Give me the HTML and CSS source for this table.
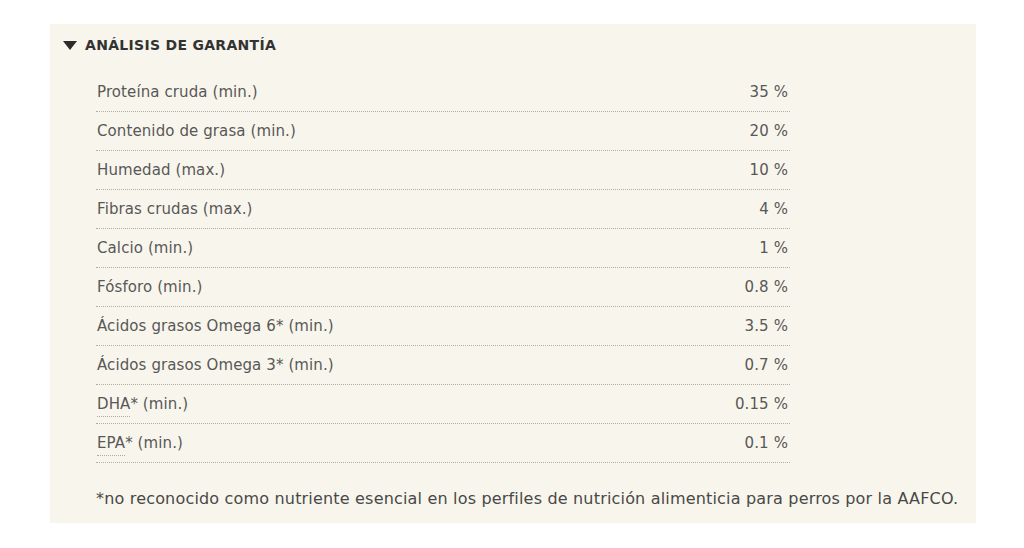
FILE: index.html
```html
<!DOCTYPE html>
<html lang="es">
<head>
<meta charset="utf-8">
<link rel="stylesheet" href="styles.css">
</head>
<body>
<section class="panel">
  <h2 class="title"><span class="tri"></span>ANÁLISIS DE GARANTÍA</h2>
  <div class="table">
    <div class="row"><span>Proteína cruda (min.)</span><span>35 %</span></div>
    <div class="row"><span>Contenido de grasa (min.)</span><span>20 %</span></div>
    <div class="row"><span>Humedad (max.)</span><span>10 %</span></div>
    <div class="row"><span>Fibras crudas (max.)</span><span>4 %</span></div>
    <div class="row"><span>Calcio (min.)</span><span>1 %</span></div>
    <div class="row"><span>Fósforo (min.)</span><span>0.8 %</span></div>
    <div class="row"><span>Ácidos grasos Omega 6* (min.)</span><span>3.5 %</span></div>
    <div class="row"><span>Ácidos grasos Omega 3* (min.)</span><span>0.7 %</span></div>
    <div class="row"><span><abbr class="ab">DHA</abbr>* (min.)</span><span>0.15 %</span></div>
    <div class="row"><span><abbr class="ab">EPA</abbr>* (min.)</span><span>0.1 %</span></div>
  </div>
  <p class="note">*no reconocido como nutriente esencial en los perfiles de nutrición alimenticia para perros por la AAFCO.</p>
</section>
</body>
</html>
```
FILE: styles.css
```css
html, body { margin: 0; padding: 0; background: #fff; }
body { padding-top: 24px; font-family: "DejaVu Sans", sans-serif; }
.panel {
  margin-left: 50px;
  width: 926px;
  height: 499px;
  box-sizing: border-box;
  background: #f8f6ec;
  padding: 12px 0 0 13px;
}
.title {
  margin: 0;
  display: flex;
  align-items: center;
  gap: 8px;
  font-size: 14px;
  font-weight: bold;
  letter-spacing: 0.3px;
  color: #333;
  height: 18px;
}
.tri {
  width: 0; height: 0;
  border-left: 7px solid transparent;
  border-right: 7px solid transparent;
  border-top: 9px solid #2b2b2b;
}
.table {
  margin: 19px 0 0 33px;
  width: 694px;
}
.row {
  display: flex;
  justify-content: space-between;
  align-items: center;
  height: 38px;
  border-bottom: 1px dotted #b0aea6;
  padding: 0 2px 0 1px;
  font-size: 15px;
  letter-spacing: 0.1px;
  color: #585858;
}
.ab { text-decoration: none; border-bottom: 1px dotted #aaa; padding-bottom: 3px; }
.note {
  margin: 26px 0 0 33px;
  font-size: 16px;
  letter-spacing: 0.18px;
  color: #484848;
}
```
